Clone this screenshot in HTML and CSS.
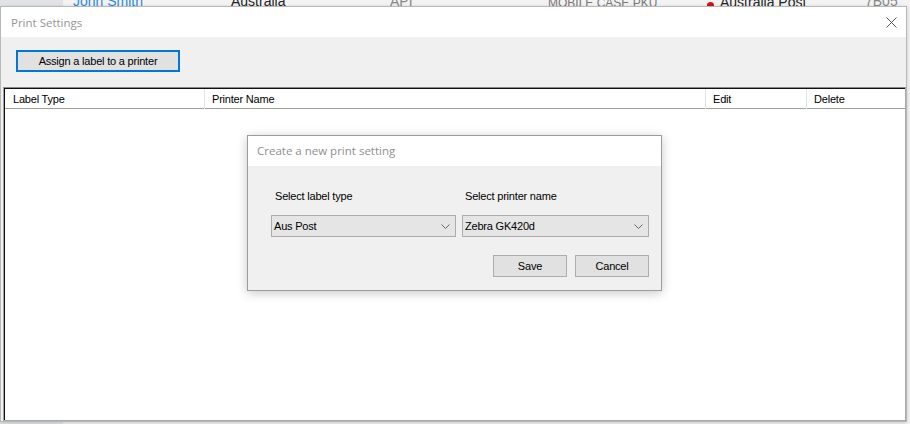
FILE: index.html
```html
<!DOCTYPE html>
<html lang="en">
<head>
  <meta charset="UTF-8" />
  <title>Print Settings</title>
  <link rel="stylesheet" href="styles.css">
</head>
<body>
  <!-- order list behind the dialogs -->
  <div class="desktop">
    <aside class="sidebar"></aside>
    <div class="orders">
      <div class="order-row">
        <span class="customer">John Smith</span>
        <span class="country">Australia</span>
        <span class="source">API</span>
        <span class="kind">MOBILE CASE PKU</span>
        <span class="carrier"><i class="dot"></i>Australia Post</span>
        <span class="code">7B05</span>
      </div>
    </div>
  </div>

  <div class="window">
    <div class="titlebar">
      <span class="title">Print Settings</span>
      <svg class="close" width="11" height="11" viewBox="0 0 11 11">
        <path d="M0.5 0.5 L10.5 10.5 M10.5 0.5 L0.5 10.5" stroke="#555" stroke-width="1" fill="none"/>
      </svg>
    </div>
    <div class="window-body">
      <div class="toolbar">
        <button class="btn btn-focus">Assign a label to a printer</button>
      </div>
      <div class="grid-view">
        <div class="grid-inner">
          <div class="grid-head">
            <div class="col">Label Type</div>
            <div class="col">Printer Name</div>
            <div class="col">Edit</div>
            <div class="col last">Delete</div>
          </div>
        </div>
      </div>
    </div>
  </div>

  <div class="dialog">
    <div class="dialog-title">Create a new print setting</div>
    <div class="dialog-body">
      <div class="form-grid">
        <label class="field-label">Select label type</label>
        <label class="field-label">Select printer name</label>
        <div class="combo">
          <span>Aus Post</span>
          <svg width="9" height="5" viewBox="0 0 9 5"><polyline points="0.5,0.5 4.5,4.5 8.5,0.5" fill="none" stroke="#666" stroke-width="1"/></svg>
        </div>
        <div class="combo">
          <span>Zebra GK420d</span>
          <svg width="9" height="5" viewBox="0 0 9 5"><polyline points="0.5,0.5 4.5,4.5 8.5,0.5" fill="none" stroke="#666" stroke-width="1"/></svg>
        </div>
      </div>
      <div class="actions">
        <button class="btn btn-small">Save</button>
        <button class="btn btn-small">Cancel</button>
      </div>
    </div>
  </div>
</body>
</html>
```

FILE: styles.css
```css
body {
  margin: 0;
  padding: 0;
  font-family: 'Liberation Sans', Arial, sans-serif;
  font-size: 11px;
  color: #000;
  background-color: #f3f3f3;
  overflow: hidden;
}
.desktop {
  display: grid;
  grid-template-columns: 63px 1fr;
  height: 424px;
}
.sidebar {
  background-color: #e1e3e6;
}
.orders {
  background-color: #f3f3f3;
  overflow: hidden;
}
.order-row {
  display: grid;
  grid-template-columns: 158px 159px 158px 159px 158px 1fr;
  padding-left: 10px;
  margin-top: -7px;
  height: 16px;
  line-height: 16px;
  font-size: 14px;
  white-space: nowrap;
}
.customer { color: #2f8bd6; }
.country { color: #222; }
.source { color: #888; }
.kind { color: #777; font-size: 12px; margin-top: 2px; }
.carrier { color: #222; display: flex; align-items: center; }
.carrier .dot {
  width: 7px;
  height: 7px;
  border-radius: 50%;
  background-color: #d0101a;
  margin-right: 6px;
  margin-top: 6px;
}
.code { color: #888; }

.window {
  position: absolute;
  left: 0;
  top: 6px;
  width: 905px;
  height: 414px;
  border: 1px solid #b8b8b8;
  background-color: #f0f0f0;
  display: flex;
  flex-direction: column;
  box-shadow: 0 1px 4px rgba(0, 0, 0, 0.18);
}
.titlebar {
  height: 30px;
  background-color: #fff;
  display: flex;
  align-items: center;
  justify-content: space-between;
  padding: 0 9px 0 10px;
}
.title, .dialog-title {
  font-family: 'Open Sans', 'Liberation Sans', sans-serif;
  font-size: 11.5px;
  color: #959595;
}
.window-body {
  flex: 1;
  display: flex;
  flex-direction: column;
}
.toolbar {
  padding: 13px 0 0 15px;
}
.btn {
  font-family: 'Liberation Sans', Arial, sans-serif;
  font-size: 11px;
  letter-spacing: -0.2px;
  color: #000;
  background-color: #e1e1e1;
  border: 1px solid #adadad;
  height: 22px;
  padding: 0;
  margin: 0;
}
.btn-focus {
  width: 164px;
  border: 2px solid #0078d7;
}
.grid-view {
  flex: 1;
  margin: 15px 0 0 2px;
  border-top: 1px solid #8a8a8a;
  border-left: 1px solid #a0a0a0;
  border-right: 1px solid #a9a9a9;
  border-bottom: 1px solid #a9a9a9;
  background-color: #fff;
  display: flex;
}
.grid-inner {
  flex: 1;
  border-top: 1px solid #111;
  border-left: 1px solid #111;
}
.grid-head {
  display: grid;
  grid-template-columns: 200px 501px 101px 1fr;
  height: 19px;
  border-bottom: 1px solid #a0a0a0;
  letter-spacing: -0.2px;
}
.grid-head .col {
  border-right: 1px solid #e3e3e3;
  padding-left: 7px;
  line-height: 20px;
}
.grid-head .col:first-child {
  padding-left: 8px;
}
.grid-head .col.last {
  border-right: none;
}

.dialog {
  position: absolute;
  left: 247px;
  top: 135px;
  width: 413px;
  border: 1px solid #9c9c9c;
  background-color: #f0f0f0;
  box-shadow: 0 2px 10px rgba(0, 0, 0, 0.22);
}
.dialog-title {
  height: 30px;
  line-height: 30px;
  background-color: #fff;
  padding-left: 9px;
  color: #8f8f8f;
}
.dialog-body {
  padding: 23px 0 13px 23px;
  width: 378px;
}
.form-grid {
  display: grid;
  grid-template-columns: 185px 187px;
  column-gap: 6px;
  row-gap: 12px;
}
.field-label {
  height: 14px;
  line-height: 14px;
  padding-left: 3px;
  letter-spacing: -0.2px;
}
.form-grid .field-label:first-child {
  padding-left: 4px;
}
.combo {
  height: 20px;
  border: 1px solid #acacac;
  background-color: #e5e5e5;
  display: flex;
  align-items: center;
  justify-content: space-between;
  padding: 0 5px 0 2px;
  letter-spacing: -0.2px;
}
.combo svg {
  margin-top: 1px;
}
.actions {
  display: flex;
  justify-content: flex-end;
  gap: 8px;
  margin-top: 18px;
}
.btn-small {
  width: 74px;
}
```
